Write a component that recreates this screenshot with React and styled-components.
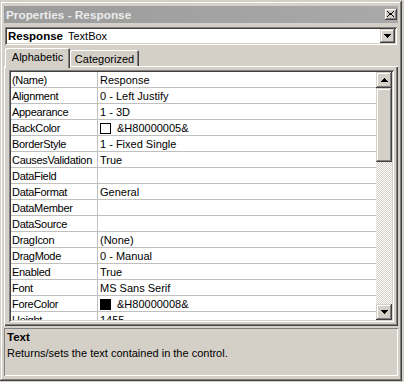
import React from 'react';
import styled, { createGlobalStyle } from 'styled-components';

const FACE = '#d4d0c8';

const GlobalStyle = createGlobalStyle`
  html, body { margin: 0; padding: 0; background: ${FACE}; }
  body {
    font-family: "Liberation Sans", Arial, sans-serif;
    font-size: 11px;
    color: #000;
  }
  * { box-sizing: border-box; }
`;

const Window = styled.div`
  margin-top: 1px;
  width: 402px;
  height: 380px;
  padding: 4px;
  background: ${FACE};
  box-shadow: inset -1px -1px #404040, inset 1px 1px ${FACE},
    inset -2px -2px #808080, inset 2px 2px #ffffff;
  display: flex;
  flex-direction: column;
`;

const TitleBar = styled.div`
  margin-top: 1px;
  height: 17px;
  display: flex;
  align-items: center;
  justify-content: space-between;
  padding: 0 1px 0 2px;
  background: linear-gradient(90deg, #9b9b9b, #a9a9a9);
`;

const TitleText = styled.span`
  font-weight: bold;
  font-size: 11.8px;
  line-height: 17px;
  padding-top: 1px;
  color: #ececec;
  white-space: nowrap;
`;

const raised = `
  background: ${FACE};
  box-shadow: inset -1px -1px #404040, inset 1px 1px ${FACE},
    inset -2px -2px #808080, inset 2px 2px #ffffff;
`;

const CloseButton = styled.div`
  width: 12px;
  height: 11px;
  background: ${FACE};
  box-shadow: inset -1px -1px #404040, inset 1px 1px #ffffff, inset -2px -2px #808080;
  display: flex;
  align-items: center;
  justify-content: center;
  padding: 0 1px 1px 0;
`;

const Combo = styled.div`
  margin: 4px 1px 0 1px;
  height: 18px;
  background: #fff;
  box-shadow: inset 1px 1px #808080, inset -1px -1px #ffffff,
    inset 2px 2px #404040, inset -2px -2px ${FACE};
  padding: 2px;
  display: flex;
`;

const ComboText = styled.div`
  flex: 1;
  padding-left: 1px;
  line-height: 14px;
  white-space: nowrap;
`;

const ObjName = styled.b`
  font-size: 11.5px;
`;

const ObjType = styled.span`
  margin-left: 5px;
`;

const ArrowButton = styled.div`
  width: ${(p) => p.$w || 16}px;
  height: ${(p) => p.$h || 16}px;
  flex: none;
  ${raised}
  display: flex;
  align-items: center;
  justify-content: center;
`;

const TabStrip = styled.div`
  margin-top: 3px;
  height: 18px;
  display: flex;
  align-items: flex-end;
  padding-left: 1px;
  position: relative;
  z-index: 1;
`;

const Tab = styled.div`
  width: ${(p) => p.$w}px;
  height: ${(p) => (p.$active ? 20 : 16)}px;
  margin-bottom: ${(p) => (p.$active ? -2 : 0)}px;
  padding-top: 2px;
  line-height: 14px;
  text-align: center;
  background: ${FACE};
  box-shadow: inset 1px 1px #ffffff, inset -1px 0 #404040, inset -2px 0 #808080;
  border-radius: 2px 2px 0 0;
`;

const TabPanel = styled.div`
  height: 260px;
  padding: 4px 4px 4px 5px;
  background: ${FACE};
  box-shadow: inset 1px 1px #ffffff, inset -1px -1px #404040, inset -2px -2px #808080;
`;

const GridFrame = styled.div`
  height: 252px;
  padding: 2px;
  background: #fff;
  box-shadow: inset 1px 1px #808080, inset -1px -1px #ffffff,
    inset 2px 2px #404040, inset -2px -2px ${FACE};
  display: flex;
`;

const Rows = styled.div`
  flex: 1;
  height: 248px;
  overflow: hidden;
`;

const Row = styled.div`
  height: 16px;
  display: grid;
  grid-template-columns: 87px 1fr;
  border-bottom: 1px solid #c0c0c0;
  line-height: 15px;
`;

const NameCell = styled.div`
  border-right: 1px solid #c0c0c0;
  padding: 1px 0 0 1px;
  letter-spacing: -0.3px;
  white-space: nowrap;
  overflow: hidden;
`;

const ValueCell = styled.div`
  padding: 1px 0 0 2px;
  display: flex;
  align-items: flex-start;
  white-space: nowrap;
`;

const Swatch = styled.span`
  width: 11px;
  height: 11px;
  margin: 2px 6px 0 0;
  border: 1px solid #000;
  background: ${(p) => p.$color};
  flex: none;
`;

const ScrollBar = styled.div`
  width: 16px;
  display: flex;
  flex-direction: column;
`;

const Thumb = styled.div`
  height: 74px;
  ${raised}
`;

const Track = styled.div`
  flex: 1;
  background: repeating-conic-gradient(${FACE} 0% 25%, #ffffff 0% 50%) 0 0 / 2px 2px;
`;

const DescPane = styled.div`
  margin-top: 2px;
  height: 48px;
  padding: 2px 3px;
  box-shadow: inset 1px 1px #808080, inset -1px -1px #ffffff;
`;

const DescTitle = styled.div`
  font-weight: bold;
  font-size: 11.5px;
  line-height: 14px;
`;

const DescText = styled.div`
  margin-top: 2px;
  line-height: 14px;
`;

const Arrow = ({ down }) => (
  <svg width="7" height="4" viewBox="0 0 7 4" shapeRendering="crispEdges">
    <path
      d={
        down
          ? 'M0 0h7v1h-7z M1 1h5v1h-5z M2 2h3v1h-3z M3 3h1v1h-1z'
          : 'M3 0h1v1h-1z M2 1h3v1h-3z M1 2h5v1h-5z M0 3h7v1h-7z'
      }
      fill="#000"
    />
  </svg>
);

const CloseGlyph = () => (
  <svg width="7" height="6" viewBox="0 0 7 6" shapeRendering="crispEdges">
    <path
      d="M0 0h1v1h-1z M6 0h1v1h-1z M1 1h1v1h-1z M5 1h1v1h-1z M2 2h3v2h-3z M1 4h1v1h-1z M5 4h1v1h-1z M0 5h1v1h-1z M6 5h1v1h-1z"
      fill="#000"
    />
  </svg>
);

const props = [
  { name: '(Name)', value: 'Response' },
  { name: 'Alignment', value: '0 - Left Justify' },
  { name: 'Appearance', value: '1 - 3D' },
  { name: 'BackColor', value: '&H80000005&', color: '#ffffff' },
  { name: 'BorderStyle', value: '1 - Fixed Single' },
  { name: 'CausesValidation', value: 'True' },
  { name: 'DataField', value: '' },
  { name: 'DataFormat', value: 'General' },
  { name: 'DataMember', value: '' },
  { name: 'DataSource', value: '' },
  { name: 'DragIcon', value: '(None)' },
  { name: 'DragMode', value: '0 - Manual' },
  { name: 'Enabled', value: 'True' },
  { name: 'Font', value: 'MS Sans Serif' },
  { name: 'ForeColor', value: '&H80000008&', color: '#000000' },
  { name: 'Height', value: '1455' },
];

export default function App() {
  return (
    <>
      <GlobalStyle />
      <Window>
        <TitleBar>
          <TitleText>Properties - Response</TitleText>
          <CloseButton>
            <CloseGlyph />
          </CloseButton>
        </TitleBar>
        <Combo>
          <ComboText>
            <ObjName>Response</ObjName>
            <ObjType>TextBox</ObjType>
          </ComboText>
          <ArrowButton $w={15} $h={14}>
            <Arrow down />
          </ArrowButton>
        </Combo>
        <TabStrip>
          <Tab $active $w={65}>Alphabetic</Tab>
          <Tab $w={69}>Categorized</Tab>
        </TabStrip>
        <TabPanel>
          <GridFrame>
            <Rows>
              {props.map((p) => (
                <Row key={p.name}>
                  <NameCell>{p.name}</NameCell>
                  <ValueCell>
                    {p.color && <Swatch $color={p.color} />}
                    {p.value}
                  </ValueCell>
                </Row>
              ))}
            </Rows>
            <ScrollBar>
              <ArrowButton>
                <Arrow />
              </ArrowButton>
              <Thumb />
              <Track />
              <ArrowButton>
                <Arrow down />
              </ArrowButton>
            </ScrollBar>
          </GridFrame>
        </TabPanel>
        <DescPane>
          <DescTitle>Text</DescTitle>
          <DescText>Returns/sets the text contained in the control.</DescText>
        </DescPane>
      </Window>
    </>
  );
}
